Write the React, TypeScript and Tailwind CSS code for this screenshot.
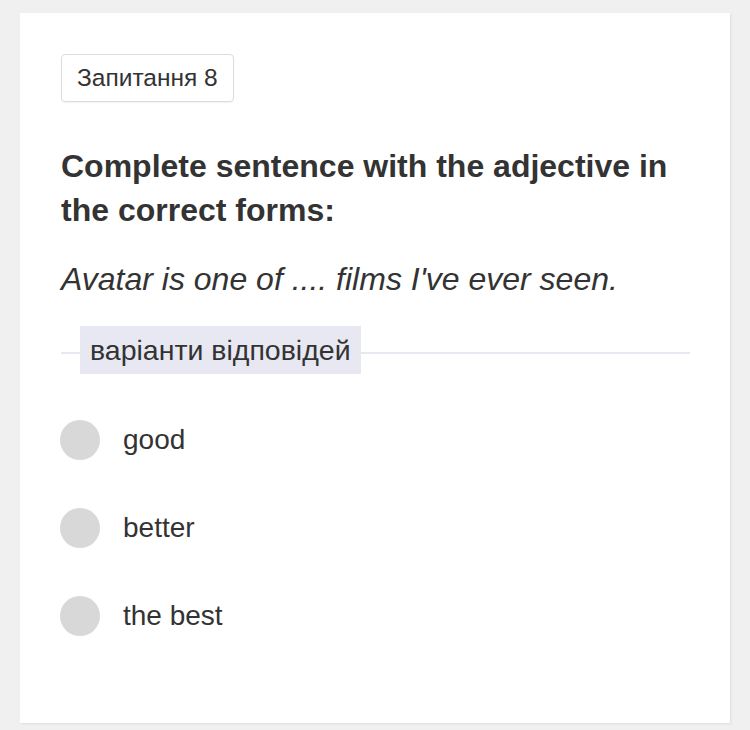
const options = ["good", "better", "the best"];

export default function App() {
  return (
    <div className="min-h-[730px] bg-[#f0f0f0] pt-[13px] px-[20px] pb-[7px] font-['Liberation_Sans',Arial,sans-serif] text-[#333]">
      <div className="bg-white min-h-[710px] pt-[41px] pl-[41px] pr-[40px] pb-[60px] shadow-[1px_1px_2px_rgba(0,0,0,0.08)]">
        {/* номер питання */}
        <div className="inline-flex items-center h-[48px] px-[15px] border border-[#dcdcdc] rounded-[4px] text-[24.5px] shadow-[0_1px_1px_rgba(0,0,0,0.05)]">
          Запитання 8
        </div>

        <h1 className="mt-[42px] text-[32px] leading-[44px] font-bold">
          Complete sentence with the adjective in the correct forms:
        </h1>

        <p className="mt-[25px] text-[32px] leading-[44px] italic">
          Avatar is one of .... films I've ever seen.
        </p>

        {/* роздільник з підписом */}
        <div className="mt-[25px] flex items-center">
          <div className="w-[19px] h-[2px] mt-[6px] bg-[#e8e8f2]"></div>
          <div className="h-[48px] px-[10px] flex items-center bg-[#e8e8f3] text-[28.5px]">
            варіанти відповідей
          </div>
          <div className="flex-1 h-[2px] mt-[6px] bg-[#e8e8f2]"></div>
        </div>

        <div className="mt-[46px] flex flex-col gap-[48px]">
          {options.map((o) => (
            <label key={o} className="flex items-center gap-[23px] h-[40px] -ml-px">
              <span className="w-[40px] h-[40px] rounded-full bg-[#d8d8d8]"></span>
              <span className="text-[28px]">{o}</span>
            </label>
          ))}
        </div>
      </div>
    </div>
  );
}
